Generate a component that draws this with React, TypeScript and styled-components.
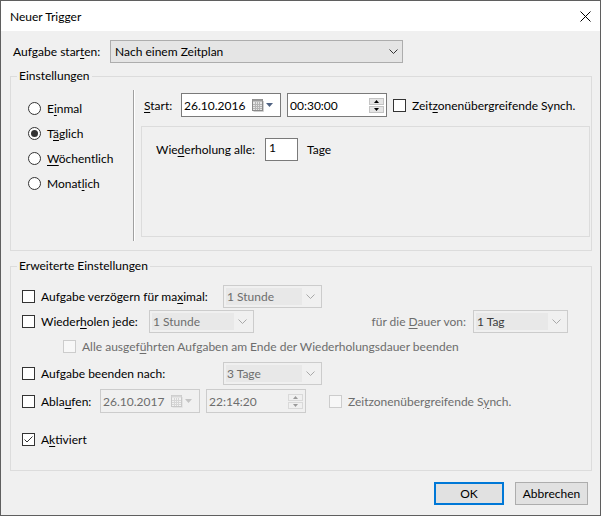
import React from "react";
import styled, { createGlobalStyle } from "styled-components";

const FONT = `Lato, "Liberation Sans", sans-serif`;

const GlobalStyle = createGlobalStyle`
  html, body { margin: 0; padding: 0; background: #ffffff; }
  * { box-sizing: border-box; }
`;

const Window = styled.div`
  width: 601px;
  height: 516px;
  border: 1px solid #5f5f5f;
  background: #f0f0f0;
  display: flex;
  flex-direction: column;
  font-family: ${FONT};
  font-size: 12px;
  color: #000;
  overflow: hidden;
`;

const TitleBar = styled.div`
  flex: 0 0 30px;
  height: 30px;
  background: #ffffff;
  display: flex;
  align-items: center;
  justify-content: space-between;
  padding-left: 9px;
`;

const TitleText = styled.span`
  font-size: 12px;
`;

const CloseBtn = styled.div`
  width: 30px;
  height: 30px;
  display: flex;
  align-items: center;
  justify-content: center;
`;

const Body = styled.div`
  flex: 1;
  display: flex;
  flex-direction: column;
  padding: 9px 8px 0 9px;
`;

const TopRow = styled.div`
  display: flex;
  align-items: center;
  padding-left: 3px;
  height: 23px;
`;

const Label = styled.span<{ $w?: number; $disabled?: boolean; $right?: boolean; $pr?: number }>`
  flex: 0 0 auto;
  width: ${(p) => (p.$w ? `${p.$w}px` : "auto")};
  color: ${(p) => (p.$disabled ? "#6d6d6d" : "#000")};
  text-align: ${(p) => (p.$right ? "right" : "left")};
  padding-right: ${(p) => p.$pr ?? 0}px;
  white-space: nowrap;
`;

const Acc = styled.span`
  text-decoration: underline;
  text-underline-offset: 2px;
  text-decoration-thickness: 1px;
`;

const MainCombo = styled.div`
  width: 293px;
  height: 23px;
  background: #e5e5e5;
  border: 1px solid #adadad;
  display: flex;
  align-items: center;
  justify-content: space-between;
  padding: 0 4px 0 4px;
`;

const DropCombo = styled.div<{ $w: number; $dark?: boolean }>`
  width: ${(p) => p.$w}px;
  height: 23px;
  border: 1px solid #cccccc;
  background: #f0f0f0;
  display: flex;
  align-items: center;
  padding: 2px 6px 2px 2px;
  gap: 4px;
  flex: 0 0 auto;
`;

const DropText = styled.span<{ $dark?: boolean }>`
  flex: 1;
  height: 100%;
  background: #e8e8e8;
  color: ${(p) => (p.$dark ? "#3c3c3c" : "#6d6d6d")};
  display: flex;
  align-items: center;
  padding-left: 1px;
  white-space: nowrap;
`;

const Group = styled.div<{ $h: number; $mt: number }>`
  position: relative;
  border: 1px solid #dcdcdc;
  height: ${(p) => p.$h}px;
  margin-top: ${(p) => p.$mt}px;
  flex: 0 0 auto;
`;

const Legend = styled.span`
  position: absolute;
  top: -9px;
  left: 6px;
  padding: 0 2px;
  background: #f0f0f0;
  line-height: 16px;
`;

const ScheduleLayout = styled.div`
  display: flex;
  height: 100%;
`;

const RadioCol = styled.div`
  flex: 0 0 122px;
  display: flex;
  flex-direction: column;
  padding: 19px 0 0 17px;
`;

const RadioRow = styled.div`
  height: 25px;
  display: flex;
  align-items: center;
  gap: 6px;
`;

const RadioCircle = styled.span<{ $checked?: boolean }>`
  width: 13px;
  height: 13px;
  border: 1px solid #333333;
  border-radius: 50%;
  background: #ffffff;
  display: flex;
  align-items: center;
  justify-content: center;
  flex: 0 0 auto;
  &::after {
    content: "";
    width: 7px;
    height: 7px;
    border-radius: 50%;
    background: ${(p) => (p.$checked ? "#333333" : "transparent")};
  }
`;

const Separator = styled.div`
  flex: 0 0 2px;
  border-left: 1px solid #a0a0a0;
  border-right: 1px solid #ffffff;
  margin: 13px 0 9px 0;
`;

const RightCol = styled.div`
  flex: 1;
  display: flex;
  flex-direction: column;
  padding: 16px 1px 13px 6px;
`;

const StartRow = styled.div`
  display: flex;
  align-items: center;
  height: 24px;
  padding-left: 3px;
`;

const Field = styled.div<{ $w: number; $disabled?: boolean; $mr?: number }>`
  width: ${(p) => p.$w}px;
  height: 24px;
  border: 1px solid ${(p) => (p.$disabled ? "#cccccc" : "#7a7a7a")};
  background: ${(p) => (p.$disabled ? "#f0f0f0" : "#ffffff")};
  color: ${(p) => (p.$disabled ? "#6d6d6d" : "#000")};
  display: flex;
  align-items: center;
  padding: 0 2px 0 2px;
  margin-right: ${(p) => p.$mr ?? 0}px;
  flex: 0 0 auto;
`;

const FieldText = styled.span`
  flex: 1;
  white-space: nowrap;
`;

const PickerIcons = styled.span`
  display: flex;
  align-items: center;
  gap: 2px;
  padding-right: 5px;
`;

const Spin = styled.span`
  display: flex;
  flex-direction: column;
  gap: 1px;
`;

const SpinBtn = styled.span<{ $disabled?: boolean }>`
  width: 15px;
  height: 7px;
  background: ${(p) => (p.$disabled ? "#f0f0f0" : "#e5e5e5")};
  border: 1px solid ${(p) => (p.$disabled ? "#d9d9d9" : "#c4c4c4")};
  display: flex;
  align-items: center;
  justify-content: center;
`;

const Panel = styled.div`
  flex: 1;
  margin-top: 9px;
  border: 1px solid #dcdcdc;
  padding: 11px 0 0 14px;
`;

const PanelRow = styled.div`
  display: flex;
  align-items: center;
  height: 23px;
`;

const SmallInput = styled.div`
  width: 33px;
  height: 23px;
  border: 1px solid #7a7a7a;
  background: #ffffff;
  padding: 1px 0 0 3px;
  margin-right: 9px;
  line-height: 16px;
`;

const AdvBody = styled.div`
  display: flex;
  flex-direction: column;
  padding: 18px 0 0 11px;
`;

const AdvRow = styled.div<{ $mt?: number; $h?: number; $indent?: number }>`
  display: flex;
  align-items: center;
  height: ${(p) => p.$h ?? 23}px;
  margin-top: ${(p) => p.$mt ?? 0}px;
  padding-left: ${(p) => p.$indent ?? 0}px;
`;

const CheckItem = styled.div<{ $w?: number; $disabled?: boolean }>`
  display: flex;
  align-items: center;
  gap: 6px;
  flex: 0 0 auto;
  width: ${(p) => (p.$w ? `${p.$w}px` : "auto")};
  color: ${(p) => (p.$disabled ? "#6d6d6d" : "#000")};
  white-space: nowrap;
`;

const Box = styled.span<{ $disabled?: boolean }>`
  width: 13px;
  height: 13px;
  border: 1px solid ${(p) => (p.$disabled ? "#cccccc" : "#333333")};
  background: ${(p) => (p.$disabled ? "#f7f7f7" : "#ffffff")};
  display: flex;
  align-items: center;
  justify-content: center;
  flex: 0 0 auto;
`;

const Footer = styled.div`
  display: flex;
  justify-content: flex-end;
  gap: 11px;
  margin-top: 11px;
  padding-right: 4px;
`;

const Button = styled.button<{ $w: number; $default?: boolean }>`
  width: ${(p) => p.$w}px;
  height: 23px;
  background: #e1e1e1;
  border: ${(p) => (p.$default ? "2px solid #0078d7" : "1px solid #adadad")};
  font-family: ${FONT};
  font-size: 12px;
  color: #000;
  padding: 0;
`;

const Chevron = ({ color }: { color: string }) => (
  <svg width="9" height="5" viewBox="0 0 9 5">
    <polyline points="0.5,0.5 4.5,4.5 8.5,0.5" fill="none" stroke={color} strokeWidth="1" />
  </svg>
);

const CalendarIcon = ({ disabled }: { disabled?: boolean }) => {
  const stroke = disabled ? "#c8c8c8" : "#8a8a8a";
  const fill = disabled ? "#f2f2f2" : "#e6e6e6";
  const grid = disabled ? "#d6d6d6" : "#b4b4b4";
  return (
    <svg width="12" height="13" viewBox="0 0 12 13">
      <rect x="0.5" y="0.5" width="10" height="11" fill={fill} stroke={stroke} />
      <rect x="0.5" y="0.5" width="10" height="2" fill={disabled ? "#d8d8d8" : "#9a9a9a"} />
      <line x1="3.5" y1="3" x2="3.5" y2="11" stroke={grid} />
      <line x1="5.5" y1="3" x2="5.5" y2="11" stroke={grid} />
      <line x1="7.5" y1="3" x2="7.5" y2="11" stroke={grid} />
      <line x1="1" y1="5.5" x2="10" y2="5.5" stroke={grid} />
      <line x1="1" y1="7.5" x2="10" y2="7.5" stroke={grid} />
      <line x1="1" y1="9.5" x2="10" y2="9.5" stroke={grid} />
      <line x1="11.5" y1="2" x2="11.5" y2="12.5" stroke={disabled ? "#e4e4e4" : "#cfcfcf"} />
      <line x1="1.5" y1="12.5" x2="11.5" y2="12.5" stroke={disabled ? "#e4e4e4" : "#cfcfcf"} />
    </svg>
  );
};

const DownTriangle = ({ color }: { color: string }) => (
  <svg width="7" height="4" viewBox="0 0 7 4">
    <polygon points="0,0 7,0 3.5,4" fill={color} />
  </svg>
);

const SpinArrow = ({ up, color }: { up?: boolean; color: string }) => (
  <svg width="5" height="3" viewBox="0 0 5 3">
    <polygon points={up ? "0,3 5,3 2.5,0" : "0,0 5,0 2.5,3"} fill={color} />
  </svg>
);

const DateField = ({ value, disabled, mr }: { value: string; disabled?: boolean; mr?: number }) => (
  <Field $w={100} $disabled={disabled} $mr={mr}>
    <FieldText>{value}</FieldText>
    <PickerIcons>
      <CalendarIcon disabled={disabled} />
      <DownTriangle color={disabled ? "#c4c4c4" : "#4f6282"} />
    </PickerIcons>
  </Field>
);

const TimeField = ({ value, disabled, mr }: { value: string; disabled?: boolean; mr?: number }) => (
  <Field $w={100} $disabled={disabled} $mr={mr}>
    <FieldText>{value}</FieldText>
    <Spin>
      <SpinBtn $disabled={disabled}>
        <SpinArrow up color={disabled ? "#9a9a9a" : "#000"} />
      </SpinBtn>
      <SpinBtn $disabled={disabled}>
        <SpinArrow color={disabled ? "#9a9a9a" : "#000"} />
      </SpinBtn>
    </Spin>
  </Field>
);

const Check = ({ disabled, checked }: { disabled?: boolean; checked?: boolean }) => (
  <Box $disabled={disabled}>
    {checked && (
      <svg width="11" height="11" viewBox="0 0 11 11">
        <polyline points="1.5,5.5 4,8 9.5,2.5" fill="none" stroke="#333" strokeWidth="1" />
      </svg>
    )}
  </Box>
);

const Drop = ({ w, text, dark }: { w: number; text: string; dark?: boolean }) => (
  <DropCombo $w={w}>
    <DropText $dark={dark}>{text}</DropText>
    <Chevron color="#a8a8a8" />
  </DropCombo>
);

export default function App() {
  return (
    <>
      <GlobalStyle />
      <Window>
        <TitleBar>
          <TitleText>Neuer Trigger</TitleText>
          <CloseBtn>
            <svg width="11" height="11" viewBox="0 0 11 11">
              <line x1="0.5" y1="0.5" x2="10.5" y2="10.5" stroke="#000" strokeWidth="1" />
              <line x1="10.5" y1="0.5" x2="0.5" y2="10.5" stroke="#000" strokeWidth="1" />
            </svg>
          </CloseBtn>
        </TitleBar>
        <Body>
          <TopRow>
            <Label $w={97}>
              Aufgabe star<Acc>t</Acc>en:
            </Label>
            <MainCombo>
              <span>Nach einem Zeitplan</span>
              <Chevron color="#333" />
            </MainCombo>
          </TopRow>

          <Group $h={175} $mt={13}>
            <Legend>Einstellungen</Legend>
            <ScheduleLayout>
              <RadioCol>
                <RadioRow>
                  <RadioCircle />
                  <span>
                    E<Acc>i</Acc>nmal
                  </span>
                </RadioRow>
                <RadioRow>
                  <RadioCircle $checked />
                  <span>
                    T<Acc>ä</Acc>glich
                  </span>
                </RadioRow>
                <RadioRow>
                  <RadioCircle />
                  <span>
                    <Acc>W</Acc>öchentlich
                  </span>
                </RadioRow>
                <RadioRow>
                  <RadioCircle />
                  <span>
                    Monat<Acc>l</Acc>ich
                  </span>
                </RadioRow>
              </RadioCol>
              <Separator />
              <RightCol>
                <StartRow>
                  <Label $w={37}>
                    <Acc>S</Acc>tart:
                  </Label>
                  <DateField value="26.10.2016" mr={6} />
                  <TimeField value="00:30:00" mr={6} />
                  <CheckItem>
                    <Check />
                    <span>
                      Zeit<Acc>z</Acc>onenübergreifende Synch.
                    </span>
                  </CheckItem>
                </StartRow>
                <Panel>
                  <PanelRow>
                    <Label $w={109}>
                      Wie<Acc>d</Acc>erholung alle:
                    </Label>
                    <SmallInput>1</SmallInput>
                    <span>Tage</span>
                  </PanelRow>
                </Panel>
              </RightCol>
            </ScheduleLayout>
          </Group>

          <Group $h={205} $mt={15}>
            <Legend>Erweiterte Einstellungen</Legend>
            <AdvBody>
              <AdvRow>
                <CheckItem $w={201}>
                  <Check />
                  <span>
                    Aufgabe verzögern für ma<Acc>x</Acc>imal:
                  </span>
                </CheckItem>
                <Drop w={99} text="1 Stunde" />
              </AdvRow>
              <AdvRow $mt={2}>
                <CheckItem $w={127}>
                  <Check />
                  <span>
                    Wieder<Acc>h</Acc>olen jede:
                  </span>
                </CheckItem>
                <Drop w={105} text="1 Stunde" />
                <Label $w={219} $right $pr={7} $disabled>
                  für die <Acc>D</Acc>auer von:
                </Label>
                <Drop w={95} text="1 Tag" dark />
              </AdvRow>
              <AdvRow $mt={2} $indent={41}>
                <CheckItem $disabled>
                  <Check disabled />
                  <span>
                    Alle ausgef<Acc>ü</Acc>hrten Aufgaben am Ende der Wiederholungsdauer beenden
                  </span>
                </CheckItem>
              </AdvRow>
              <AdvRow $mt={4}>
                <CheckItem $w={201}>
                  <Check />
                  <span>Aufgabe beenden nach:</span>
                </CheckItem>
                <Drop w={99} text="3 Tage" />
              </AdvRow>
              <AdvRow $mt={4} $h={24}>
                <CheckItem $w={78}>
                  <Check />
                  <span>
                    Abla<Acc>u</Acc>fen:
                  </span>
                </CheckItem>
                <DateField value="26.10.2017" disabled mr={6} />
                <TimeField value="22:14:20" disabled mr={23} />
                <CheckItem $disabled>
                  <Check disabled />
                  <span>
                    Zeitzonenübergreifende S<Acc>y</Acc>nch.
                  </span>
                </CheckItem>
              </AdvRow>
              <AdvRow $mt={15}>
                <CheckItem>
                  <Check checked />
                  <span>
                    A<Acc>k</Acc>tiviert
                  </span>
                </CheckItem>
              </AdvRow>
            </AdvBody>
          </Group>

          <Footer>
            <Button $w={70} $default>
              OK
            </Button>
            <Button $w={73}>Abbrechen</Button>
          </Footer>
        </Body>
      </Window>
    </>
  );
}
